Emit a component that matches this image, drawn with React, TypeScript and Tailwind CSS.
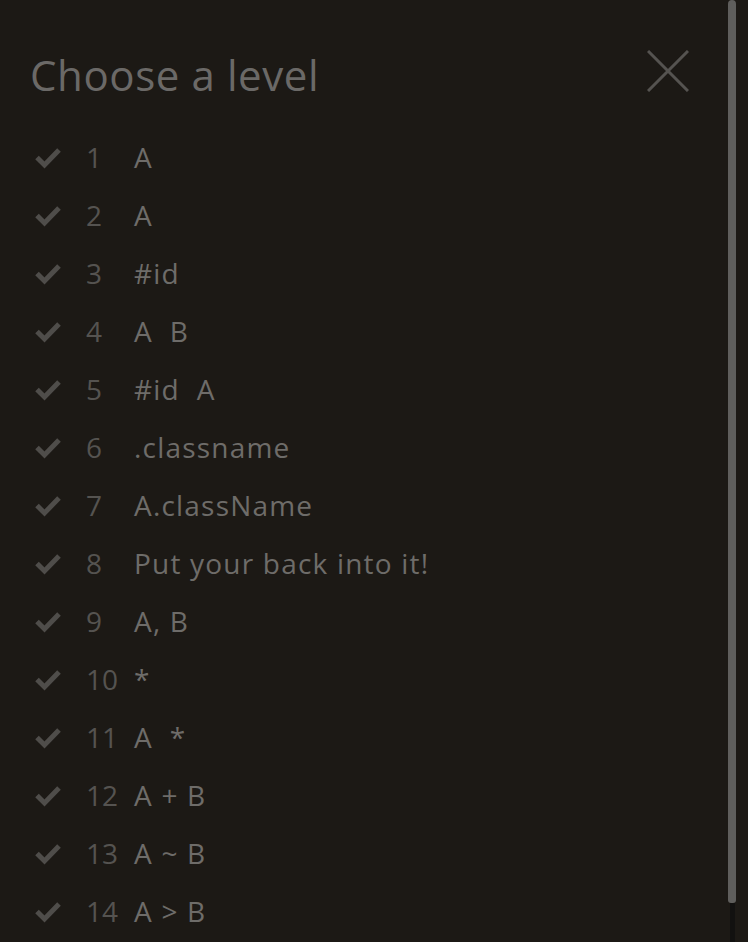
import React from "react";

const levels: [string, string][] = [
  ["1", "A"],
  ["2", "A"],
  ["3", "#id"],
  ["4", "A  B"],
  ["5", "#id  A"],
  ["6", ".classname"],
  ["7", "A.className"],
  ["8", "Put your back into it!"],
  ["9", "A, B"],
  ["10", "*"],
  ["11", "A  *"],
  ["12", "A + B"],
  ["13", "A ~ B"],
  ["14", "A > B"],
];

function Check() {
  return (
    <svg width="28" height="24" viewBox="0 0 28 24" className="shrink-0">
      <path d="M3 12.5 L10.5 20 L25 5" fill="none" stroke="#4f4d4a" strokeWidth="5" strokeLinecap="butt" strokeLinejoin="miter" />
    </svg>
  );
}

export default function App() {
  return (
    <div
      className="relative w-[748px] h-[942px] overflow-hidden bg-[#1c1915]"
      style={{ fontFamily: '"Open Sans", "Noto Sans", sans-serif' }}
    >
      <div className="pl-[31px] pr-[58px] pt-[46px]">
        <div className="flex items-start justify-between">
          <h1 className="-ml-[1px] text-[42px] leading-[58px] text-[#6b6967] tracking-[0.6px]">Choose a level</h1>
          <svg width="42" height="42" viewBox="0 0 42 42" className="mt-[4px] mr-[1px]">
            <path d="M1 1 L41 41 M41 1 L1 41" stroke="#555350" strokeWidth="3" />
          </svg>
        </div>
        <ul className="mt-[24px] flex flex-col">
          {levels.map(([n, s]) => (
            <li key={n} className="flex h-[58px] items-center">
              <div className="ml-[3px] w-[52px]">
                <Check />
              </div>
              <span className="w-[48px] text-[28px] text-[#555350]">{n}</span>
              <span className="text-[28px] tracking-[1.2px] text-[#6e6c69] whitespace-pre">{s}</span>
            </li>
          ))}
        </ul>
      </div>
      <div className="absolute right-[12px] top-0 h-[942px] w-[8px]">
        <div className="h-[903px] w-[8px] rounded-b-[3px] rounded-t-[4px] bg-[#5f5e5c]" />
        <div className="mx-auto h-[39px] w-[5px] bg-[#121110]" />
      </div>
    </div>
  );
}
